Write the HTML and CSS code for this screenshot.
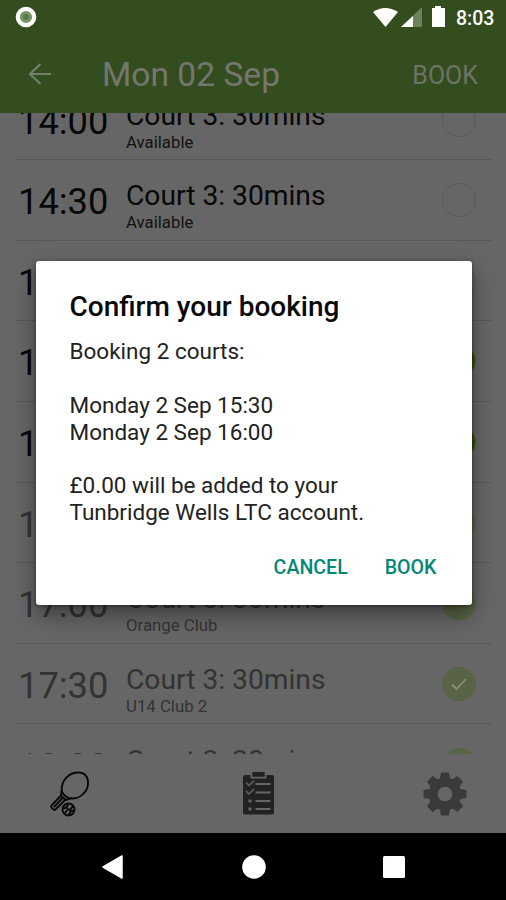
FILE: index.html
```html
<!DOCTYPE html>
<html lang="en">
<head>
<meta charset="utf-8">
<title>Court booking</title>
<link rel="stylesheet" href="styles.css">
</head>
<body>
<div class="phone">
  <header class="top">
    <div class="status">
      <svg class="record" width="24" height="24" viewBox="0 0 24 24"><circle cx="12" cy="12" r="8.2" fill="#789568" stroke="#fff" stroke-width="4.2"/><circle cx="12" cy="12" r="3" fill="#587a49"/></svg>
      <svg class="signals" width="76" height="24" viewBox="0 0 76 24"><path d="M1 7Q13-1 26 7L13.500 22Z" fill="#fff"/><path d="M50 2V22H29Z" fill="#6b835d"/><path d="M41 11V22H29Z" fill="#fff"/><path d="M63 1h6v2h4v19H60V3h3Z" fill="#fff"/></svg>
      <span class="clock">8:03</span>
    </div>
    <div class="bar">
      <svg class="back" width="24" height="24" viewBox="0 0 24 24"><path d="M23 12H2M12.500 2 2 12l10.500 10" fill="none" stroke="#74806c" stroke-width="2.2"/></svg>
      <h1 class="day">Mon 02 Sep</h1>
      <span class="action">BOOK</span>
    </div>
  </header>
  <main class="list">
    <div class="rows">
      <div class="row"><span class="time">14:00</span><div class="info"><div class="court">Court 3: 30mins</div><div class="sub">Available</div></div><span class="pick"></span></div>
      <div class="row"><span class="time">14:30</span><div class="info"><div class="court">Court 3: 30mins</div><div class="sub">Available</div></div><span class="pick"></span></div>
      <div class="row"><span class="time">15:00</span><span class="pick"></span></div>
      <div class="row"><span class="time">15:30</span><span class="pick on"></span></div>
      <div class="row"><span class="time">16:00</span><span class="pick on"></span></div>
      <div class="row taken"><span class="time">16:30</span><span class="pick"></span></div>
      <div class="row taken"><span class="time">17:00</span><div class="info"><div class="court">Court 3: 30mins</div><div class="sub">Orange Club</div></div><span class="pick"></span></div>
      <div class="row taken"><span class="time">17:30</span><div class="info"><div class="court">Court 3: 30mins</div><div class="sub">U14 Club 2</div></div><span class="pick"><svg width="34" height="34" viewBox="0 0 34 34"><path d="M10 17.500l4.500 4.500 9.500-10" fill="none" stroke="#858d7d" stroke-width="1.800"/></svg></span></div>
      <div class="row taken last"><span class="time">18:00</span><div class="info"><div class="court">Court 3: 30mins</div></div><span class="pick"></span></div>
    </div>
  </main>
  <nav class="tabs">
    <svg class="tab" width="48" height="48" viewBox="0 0 48 48" fill="none" stroke="#080808" stroke-width="1.900"><path d="M14 22C12 10 22 2 31 2.500 42 3 42 17 36 23 30 30 19 31 14 22ZM13.500 20 13 26 18 30 24 28M12.500 26 3.500 35.500a1.500 1.500 0 0 0 0 2l2 2a1.500 1.500 0 0 0 2 0L17 30M6 37 14.500 28"/><circle cx="20.500" cy="39.500" r="6"/><path d="M15 38q4 1 5-4M26 41q-4-1-5 4M17 43l3-4 2 1 3-4"/></svg>
    <svg class="tab" width="48" height="48" viewBox="0 0 48 48"><rect x="8" y="5" width="31" height="39.500" rx="2" fill="#222"/><path d="M16.500 3.500v4h14v-4" fill="#222" stroke="#666" stroke-width="2"/><path d="M17.500 2h12v4.500h-12Z" fill="#222"/><path d="M20.500 14h15M20.500 22.500h15M20.500 31h15M20.500 39h15" fill="none" stroke="#666" stroke-width="1.800"/><path d="M11 12.500l3 3 5-5M11 21l3 3 5-5" fill="none" stroke="#5e5e5e" stroke-width="1.700"/><path d="M13.500 29.500h3v3h-3zM13.500 37.500h3v3h-3z" fill="#666"/></svg>
    <svg class="tab" width="48" height="48" viewBox="-24 -24 48 48"><g fill="#3a3a3a"><circle r="16.500"/><path id="tooth" d="M-5-15-4-21.500H4L5-15V15L4 21.500H-4L-5 15Z"/><use href="#tooth" transform="rotate(45)"/><use href="#tooth" transform="rotate(90)"/><use href="#tooth" transform="rotate(135)"/></g><circle r="7.300" fill="#666"/></svg>
  </nav>
  <footer class="keys">
    <svg width="26" height="26" viewBox="0 0 26 26"><path d="M3 13 22 2V24Z" fill="#fff" stroke="#fff" stroke-width="1.500" stroke-linejoin="round"/></svg>
    <svg width="26" height="26" viewBox="0 0 26 26"><circle cx="13" cy="13" r="11.800" fill="#fff"/></svg>
    <svg width="26" height="26" viewBox="0 0 26 26"><rect x="2" y="2" width="22" height="22" rx="1.500" fill="#fff"/></svg>
  </footer>
  <section class="dialog">
    <h2 class="title">Confirm your booking</h2>
    <div class="message">
      <p class="intro">Booking 2 courts:</p>
      <p class="slot1">Monday 2 Sep 15:30</p>
      <p class="slot2">Monday 2 Sep 16:00</p>
      <p class="fee">£0.00 will be added to your</p>
      <p class="account">Tunbridge Wells LTC account.</p>
    </div>
    <div class="buttons"><span class="cancel">CANCEL</span><span class="book">BOOK</span></div>
  </section>
</div>
</body>
</html>
```
FILE: styles.css
```css
* { box-sizing: border-box; }
body { margin: 0; font-family: Roboto, "Liberation Sans", sans-serif; }
h1, h2, p { margin: 0; font-weight: 400; }
svg { display: block; flex: none; }
.phone { position: relative; width: 506px; height: 900px; display: flex; flex-direction: column; background: #666; overflow: hidden; white-space: nowrap; }
.top { height: 113px; flex: none; background: #334d1f; }
.status { height: 36px; display: flex; align-items: center; padding: 0 11px 0 14px; }
.signals { margin-left: auto; margin-right: 8px; margin-bottom: 2px; }
.record { margin-bottom: 2px; }
.clock { width: 39px; padding-top: 1px; color: #fff; font-size: 19.5px; font-weight: 500; line-height: 36px; }
.bar { height: 77px; display: flex; align-items: center; padding: 0 28px; }
.back { margin-bottom: 2px; }
.day { margin-left: 50px; font-size: 33.6px; line-height: 77px; color: #73776f; }
.action { margin-left: auto; padding-top: 1px; font-size: 25px; color: #6d736a; }
.list { height: 641px; flex: none; overflow: hidden; }
.rows { margin-top: -33.4px; }
.row { height: 80.6px; margin: 0 15px 0 16px; border-bottom: 1px solid #585858; display: flex; color: #080808; }
.time { width: 107px; padding: 20px 0 0 2px; font-size: 36.3px; line-height: 44px; }
.info { padding: 0 0 0 3px; }
.court { margin-top: 19px; font-size: 28.2px; line-height: 34px; }
.sub { font-size: 16.8px; line-height: 20px; color: #121212; margin-top: -1px; }
.pick { width: 34px; height: 34px; margin: 23px 15px 0 auto; border: 1px solid #59604f; border-radius: 50%; }
.on { background: #345000; }
.taken, .taken .sub { color: #333; }
.taken .pick { background: #586445; border: 0; }
.last { padding-top: 1px; }
.tabs { height: 79px; flex: none; display: flex; justify-content: space-between; align-items: center; padding: 0 37px 0 48px; background: #666; }
.keys { height: 67px; flex: none; background: #000; display: flex; justify-content: space-between; align-items: center; padding: 0 99px 0 100px; }
.dialog { position: absolute; left: 35.5px; top: 261.3px; width: 436px; height: 344px; border-radius: 3px; background: #fff; padding: 26px 35px 0 34px; box-shadow: 0 10px 22px rgba(0,0,0,.4), 0 1px 4px rgba(0,0,0,.4); }
.title { font-size: 28px; line-height: 40px; font-weight: 500; color: #090909; }
.message { margin-top: 11.2px; font-size: 22.5px; line-height: 26.7px; color: #222; }
.slot1, .fee { margin-top: 26.7px; }
.buttons { margin-top: 31px; display: flex; justify-content: flex-end; gap: 37px; font-size: 19.6px; line-height: 24px; font-weight: 500; color: #008875; }
```
